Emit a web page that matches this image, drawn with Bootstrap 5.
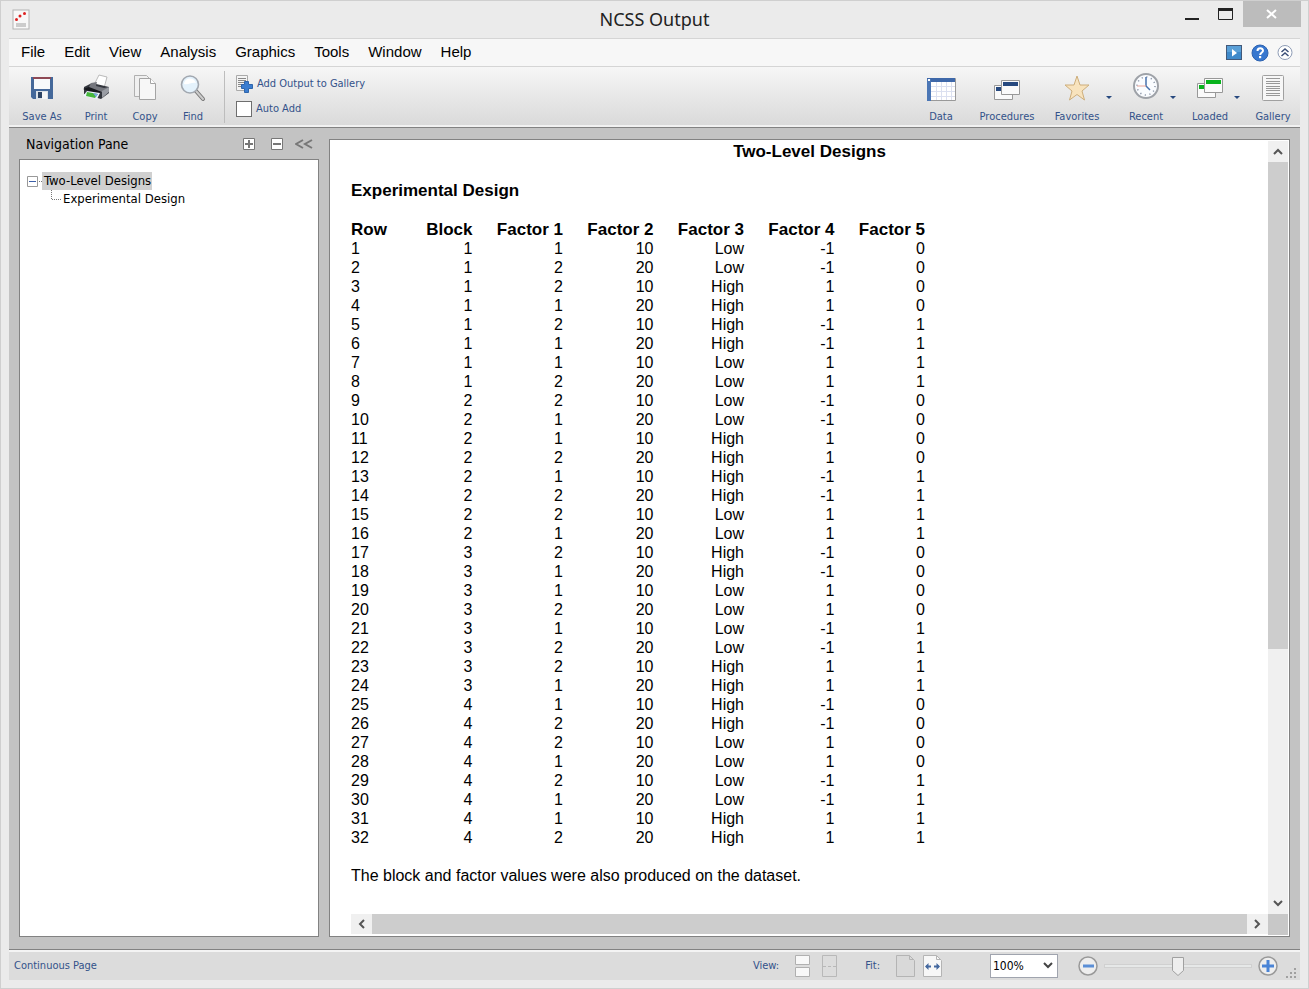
<!DOCTYPE html>
<html lang="en">
<head>
<meta charset="utf-8">
<meta name="viewport" content="width=device-width, initial-scale=1">
<title>NCSS Output</title>
<link href="https://cdn.jsdelivr.net/npm/bootstrap@5.3.0/dist/css/bootstrap.min.css" rel="stylesheet">
<style>
:root { --ui: "DejaVu Sans Condensed", "Noto Sans", sans-serif; --arial: "Liberation Sans", Arial, sans-serif; --navy: #33528a; }
body { background: #ebebeb; border: 1px solid #cfcfcf; color: #000; font-family: var(--ui); font-size: 11px; line-height: 14px; padding: 0 8px 8px; }
button { background: none; border: 0; padding: 0; color: inherit; }
svg { display: block; flex: none; }
.titlebar { height: 37px; }
.titlebar h1 { font: 18px/36px "Noto Sans", sans-serif; color: #222; }
.app-icon { position: absolute; left: 3px; top: 8px; }
.win-controls { position: absolute; right: -1px; top: 0; }
.win-btn { width: 34px; height: 26px; }
.win-btn.close-btn { width: 58px; background: #bcbcbc; }
.menubar { height: 29px; background: #f7f7f7; border: 1px solid #d5d5d5; border-width: 1px 0; padding: 0 7px 0 2px; }
.menubar a { font: 15px/25px var(--arial); color: #000; padding: 0 9px 2px 10px; text-decoration: none; }
.ribbon { height: 61px; background: linear-gradient(#f6f6f6, #d9d9d9); border-bottom: 1px solid #828282; padding: 0 7px 0 4px; color: var(--navy); box-shadow: inset 0 -2px #f1f1f1; }
.tool { display: flex; flex-direction: column; align-items: center; height: 57px; white-space: nowrap; }
.tool .pic { height: 42px; margin-bottom: 1px; display: flex; align-items: center; justify-content: center; }
.tool-40 { width: 40px; } .tool-42 { width: 42px; } .tool-44 { width: 44px; } .tool-48 { width: 48px; } .tool-50 { width: 50px; } .tool-52 { width: 52px; } .tool-58 { width: 58px; } .tool-68 { width: 68px; }
.ribbon-views { gap: 10px; }
.drop { width: 12px; height: 60px; display: flex; align-items: center; justify-content: center; }
.vr-line { width: 1px; height: 52px; background: #bdbdbd; margin: 4px 11px 0 7px; }
.auto-add { width: 16px; height: 16px; appearance: none; background: #fff; border: 1px solid #6e6e6e; margin: 0; }
.workspace { background: #c3c3c3; padding: 11px 10px 12px; border-bottom: 1px solid #828282; gap: 10px; min-height: 0; }
.nav-pane { width: 300px; flex: none; }
.pane-head { height: 20px; padding: 0 6px 11px 7px; }
.pane-head h2 { font: 14px/14px var(--ui); }
.panel { background: #fff; border: 1px solid #828282; }
.tree { font-size: 13px; padding: 12px 7px; }
.tree a { color: #000; text-decoration: none; line-height: 18px; height: 18px; padding: 0 1px 0 2px; white-space: nowrap; }
.tree a.chosen { background: #d0d0d0; }
.report-panel { display: grid; grid-template-columns: 20px minmax(0, 1fr) 20px; grid-template-rows: minmax(0, 1fr) 21px; padding: 1px; }
.report { grid-column: 2; overflow: hidden; font: 16px/19px var(--arial); padding-top: 1px; }
.report h2, .report h3 { font: bold 17px/19px var(--arial); margin: 0 0 20px; }
.report table { width: 574px; table-layout: fixed; margin-bottom: 19px; }
.report th, .report td { padding: 0; text-align: right; white-space: nowrap; }
.report th { font-size: 17px; }
.report th:first-child, .report td:first-child { text-align: left; }
.report .col-first { width: 31px; }
.sb { background: #f0f0f0; display: flex; }
.sb button { display: flex; align-items: center; justify-content: center; flex: none; }
.sb-v { grid-column: 3; flex-direction: column; }
.sb-v button { height: 21px; }
.sb-v .thumb { height: 63%; background: #cdcdcd; }
.sb-h { grid-column: 2; margin-bottom: 1px; }
.sb-h button { width: 21px; }
.sb-h .thumb { flex: 1; background: #cdcdcd; }
.corner { background: #c8c8c8; }
.status { height: 30px; background: #dcdcdc; border-top: 2px solid #f4f4f4; color: var(--navy); padding: 0 3px 0 5px; }
.status select { width: 68px; height: 24px; border: 1px solid #a0a4ae; background: #fff; font: 12px/20px var(--ui); color: #000; appearance: none; padding: 0 2px; }
.zoom-box .chev { position: absolute; right: 5px; top: 8px; pointer-events: none; }
.zoom-range { appearance: none; width: 148px; height: 20px; background: none; margin: 0 6px; }
.zoom-range::-webkit-slider-runnable-track { height: 4px; background: #e6e8e8; border: 1px solid #d0d0d0; }
.zoom-range::-webkit-slider-thumb { appearance: none; width: 12px; height: 20px; margin-top: -9px; background: url("data:image/svg+xml,%3Csvg xmlns='http://www.w3.org/2000/svg' width='12' height='20'%3E%3Cpath d='M.5 1.500h11v13l-5.500 5-5.500-5z' fill='%23eee' stroke='%23a0a0a0'/%3E%3C/svg%3E"); }
</style>
</head>
<body class="vh-100 d-flex flex-column overflow-hidden">
<header class="titlebar position-relative text-center flex-shrink-0">
  <svg class="app-icon" width="18" height="21" viewBox="0 0 18 21"><rect x="1" y="1" width="16" height="19" fill="#f8f8f8" stroke="#b4b4b4"/><rect x="4" y="14" width="10" height="4" fill="#ccc"/><g fill="#d22"><circle cx="4.500" cy="10.500" r="1.500"/><circle cx="8" cy="7" r="1.500"/><circle cx="12.500" cy="4.500" r="1.500"/></g></svg>
  <h1 class="m-0">NCSS Output</h1>
  <div class="win-controls d-flex">
    <button class="win-btn" aria-label="Minimize"><svg width="34" height="26"><path d="M10 18h14" stroke="#222" stroke-width="2"/></svg></button>
    <button class="win-btn" aria-label="Maximize"><svg width="34" height="26"><path d="M9.500 8v10.500h14V8" fill="none" stroke="#222"/><path d="M9 8.500h15" stroke="#222" stroke-width="3"/></svg></button>
    <button class="win-btn close-btn" aria-label="Close"><svg width="58" height="26"><path d="M24 9l9 8M33 9l-9 8" stroke="#fff" stroke-width="2"/></svg></button>
  </div>
</header>

<nav class="menubar d-flex align-items-center flex-shrink-0" aria-label="Main menu">
  <a href="#">File</a><a href="#">Edit</a><a href="#">View</a><a href="#">Analysis</a><a href="#">Graphics</a><a href="#">Tools</a><a href="#">Window</a><a href="#">Help</a>
  <div class="d-flex align-items-center ms-auto gap-2">
    <button aria-label="Play tutorial"><svg width="18" height="18"><rect x="1.500" y="1.500" width="15" height="14" fill="#3f8acb" stroke="#42597a"/><path d="M2 2h14v6H2z" fill="#5aa0d8"/><path d="M7 5l5 4-5 3.500z" fill="#fff"/></svg></button>
    <button aria-label="Help"><svg width="18" height="18"><circle cx="9" cy="9" r="8" fill="#3777cf" stroke="#2d62b0"/><path d="M6.500 7c0-3.500 5.500-3.500 5.500-.3C12 8.500 9.200 8.500 9.200 11" fill="none" stroke="#fff" stroke-width="2"/><rect x="8" y="12" width="2.200" height="2.200" fill="#fff"/></svg></button>
    <button aria-label="Collapse ribbon"><svg width="16" height="18"><circle cx="8" cy="8.500" r="7" fill="#fff" stroke="#8d9bb5"/><path d="M4.500 8L8 5l3.500 3M4.500 12L8 9l3.500 3" fill="none" stroke="#3b4f78" stroke-width="1.500"/></svg></button>
  </div>
</nav>

<div class="ribbon d-flex flex-shrink-0" role="toolbar">
  <button class="tool tool-58"><span class="pic"><svg width="24" height="26" viewBox="0 0 24 26"><path d="M1 2h22v22H3l-2-2z" fill="#44689a"/><path d="M4 2h16v12H4z" fill="#f7f9fb"/><path d="M3 2h18v2H3z" fill="#8e4854"/><path d="M6 16h12v8H6z" fill="#dce2e8"/><path d="M8 17h4v6H8z" fill="#2d4465"/><path d="M12 17h5v7h-5z" fill="#f6f6f6"/></svg></span>Save As</button>
  <button class="tool tool-50"><span class="pic"><svg width="30" height="28" viewBox="0 0 30 28"><path d="M13 11l5-10 8 2-3 11z" fill="#fff" stroke="#aaa" stroke-width=".8"/><path d="M3 13l8-4 17 4v6l-8 6L3 20z" fill="#33363d"/><path d="M2 15l9-3 11 3-4 5z" fill="#16181d"/><path d="M10 9l6-1-1 4 8 2 5-1-7 5-13-5z" fill="#75777e"/><path d="M21 17l7-4v5l-7 6z" fill="#9a9da4"/><path d="M6 17l13 2-3 6-14-3z" fill="#eef3ff"/><path d="M6 18l11 2-3 4-9-2z" fill="#46b73b"/><path d="M12 19l5 1-2 3z" fill="#79a6e6"/></svg></span>Print</button>
  <button class="tool tool-48"><span class="pic"><svg width="24" height="28" viewBox="0 0 24 28"><path d="M1.500 1.500h12l4 4v17h-16z" fill="#f0f0f0" stroke="#b0b0b0"/><path d="M6.500 4.500h11l5 5v16h-16z" fill="#f7f7f7" stroke="#a4a4a4"/><path d="M17.500 4.500v5h5" fill="#fff" stroke="#a4a4a4"/></svg></span>Copy</button>
  <button class="tool tool-48"><span class="pic"><svg width="26" height="28" viewBox="0 0 26 28"><path d="M16 17l7 8" stroke="#777" stroke-width="4" stroke-linecap="round"/><path d="M16 17l7 8" stroke="#ccc" stroke-width="2" stroke-linecap="round"/><circle cx="10" cy="10.500" r="8.500" fill="#e4f2fc" stroke="#a2a8b0" stroke-width="1.600"/><path d="M4 10c1-7 10-7 12-1-5-1-7 2-12 1z" fill="#fff"/></svg></span>Find</button>
  <div class="vr-line"></div>
  <div class="pt-2">
    <button class="d-flex align-items-center gap-1 text-nowrap"><svg width="17" height="18"><path d="M.5.5h11v15H.5z" fill="#f4f4f4" stroke="#aaa"/><path d="M2 3.500h8M2 5.500h8M2 7.500h8M2 9.500h5M2 11.500h4" stroke="#888"/><path d="M8.500 6.500h4v3h4v4h-4v4h-4v-4h-3v-4h3z" fill="#3b7dd0" stroke="#2f65ab"/></svg>Add Output to Gallery</button>
    <div class="d-flex align-items-center gap-1 pt-2"><input class="auto-add" type="checkbox" id="autoAdd"><label for="autoAdd">Auto Add</label></div>
  </div>
  <div class="ribbon-views d-flex ms-auto">
    <button class="tool tool-44"><span class="pic"><svg class="mt-1" width="30" height="24"><path d="M1.500.5h28v22h-28z" fill="#fff" stroke="#999"/><path d="M5 8.500h24M5 13.500h24M5 18.500h24M10.500 4v18M15.500 4v18M20.500 4v18M25.500 4v18" stroke="#dbe0f0"/><path d="M1 0h28v4H1z" fill="#3e68a9"/><path d="M1 1h4v22H1z" fill="#4b76b5"/><path d="M2 1h2v2H2z" fill="#fff"/></svg></span>Data</button>
    <button class="tool tool-68"><span class="pic"><svg class="mt-1" width="28" height="20"><g fill="#fafafa" stroke="#989898"><path d="M1.500 5.500h18v14h-18z"/><path d="M8.500.5h18v14h-18z"/></g><path d="M3 7h5v4H3zM10 2h15v4H10z" fill="#27497f"/></svg></span>Procedures</button>
    <div class="d-flex">
      <button class="tool tool-52"><span class="pic"><svg width="26" height="26" viewBox="0 0 26 26"><path d="M13 1l3 9h9l-7 6 2.500 9L13 19.500 5.500 25 8 16 1 10h9z" fill="#f8e3bd" stroke="#cdae7c"/></svg></span>Favorites</button>
      <button class="drop" aria-label="Favorites list"><svg width="6" height="3"><path d="M0 0h6L3 3z" fill="#27497f"/></svg></button>
    </div>
    <div class="d-flex">
      <button class="tool tool-42"><span class="pic"><svg class="mb-1" width="28" height="28"><circle cx="14" cy="14" r="12" fill="#fafcff" stroke="#9ea2a8" stroke-width="2"/><circle cx="14" cy="14" r="9" fill="none" stroke="#8b96a8" stroke-width="1.500" stroke-dasharray="1.200 3.510"/><path d="M14 5v9l4 4" fill="none" stroke="#4871ad" stroke-width="1.500"/><path d="M5 14h9" stroke="#e8a498"/></svg></span>Recent</button>
      <button class="drop" aria-label="Recent list"><svg width="6" height="3"><path d="M0 0h6L3 3z" fill="#27497f"/></svg></button>
    </div>
    <div class="d-flex">
      <button class="tool tool-42"><span class="pic"><svg width="28" height="20"><g fill="#fafafa" stroke="#989898"><path d="M1.500 5.500h18v14h-18z"/><path d="M8.500.5h18v14h-18z"/></g><path d="M3 7h5v4H3zM10 2h15v4H10z" fill="#08b31c"/></svg></span>Loaded</button>
      <button class="drop" aria-label="Loaded list"><svg width="6" height="3"><path d="M0 0h6L3 3z" fill="#27497f"/></svg></button>
    </div>
    <button class="tool tool-40"><span class="pic"><svg width="22" height="26"><rect x=".5" y=".5" width="21" height="25" rx="1" fill="#f7f7f7" stroke="#a0a0a0"/><path d="M4 3.500h14M4 6.500h14M4 8.500h14M4 11.500h14M4 13.500h14M4 15.500h14M4 18.500h14M4 20.500h14" stroke="#999"/></svg></span>Gallery</button>
  </div>
</div>

<main class="workspace d-flex flex-grow-1">
  <aside class="nav-pane d-flex flex-column">
    <div class="pane-head d-flex align-items-center">
      <h2 class="m-0 me-auto">Navigation Pane</h2>
      <button class="me-3" aria-label="Expand all"><svg width="12" height="12"><path d="M.5.5h11v11H.5z" fill="#fff" stroke="#777"/><path d="M2 6h8M6 2v8" stroke="#777" stroke-width="2"/></svg></button>
      <button class="me-2" aria-label="Collapse all"><svg width="12" height="12"><path d="M.5.5h11v11H.5z" fill="#fff" stroke="#777"/><path d="M2 6h8" stroke="#777" stroke-width="2"/></svg></button>
      <button class="ms-1" aria-label="Hide pane"><svg width="18" height="10"><path d="M8 1L1 5l7 4M17 1l-7 4 7 4" fill="none" stroke="#777" stroke-width="2"/></svg></button>
    </div>
    <div class="panel tree flex-grow-1">
      <div class="d-flex align-items-center">
        <button aria-label="Collapse Two-Level Designs"><svg width="15" height="18"><path d="M.5 4.500h10v10H.5z" fill="#fff" stroke="#999"/><path d="M2 9.500h7" stroke="#3c5fa8"/><path d="M12 9.500h3" stroke="#777" stroke-dasharray="1 1"/></svg></button>
        <a class="chosen" href="#">Two-Level Designs</a>
      </div>
      <div class="d-flex align-items-center">
        <svg width="34" height="18"><path d="M24.500 0v9.500H34" fill="none" stroke="#777" stroke-dasharray="1 1"/></svg>
        <a href="#">Experimental Design</a>
      </div>
    </div>
  </aside>

  <section class="panel report-panel flex-grow-1">
    <div class="report">
      <h2 class="text-center">Two-Level Designs</h2>
      <h3>Experimental Design</h3>
      <table>
        <colgroup><col class="col-first"><col><col><col><col><col><col></colgroup>
        <thead><tr><th>Row</th><th>Block</th><th>Factor 1</th><th>Factor 2</th><th>Factor 3</th><th>Factor 4</th><th>Factor 5</th></tr></thead>
        <tbody id="designRows"></tbody>
      </table>
      <p class="m-0">The block and factor values were also produced on the dataset.</p>
    </div>
    <div class="sb sb-v">
      <button aria-label="Scroll up"><svg width="10" height="7"><path d="M1 6l4-4 4 4" fill="none" stroke="#555" stroke-width="2"/></svg></button>
      <div class="thumb"></div>
      <button class="mt-auto" aria-label="Scroll down"><svg width="10" height="7"><path d="M1 1l4 4 4-4" fill="none" stroke="#555" stroke-width="2"/></svg></button>
    </div>
    <div class="sb sb-h">
      <button aria-label="Scroll left"><svg width="7" height="10"><path d="M6 1L2 5l4 4" fill="none" stroke="#555" stroke-width="2"/></svg></button>
      <div class="thumb"></div>
      <button aria-label="Scroll right"><svg width="7" height="10"><path d="M1 1l4 4-4 4" fill="none" stroke="#555" stroke-width="2"/></svg></button>
    </div>
    <div class="corner"></div>
  </section>
</main>

<footer class="status d-flex align-items-center flex-shrink-0">
  <span class="me-auto">Continuous Page</span>
  <span class="me-3">View:</span>
  <button class="me-2" aria-label="Continuous view"><svg width="18" height="24"><path d="M.5 1.500h14v9H.5zM.5 13.500h14v9H.5z" fill="#f8f8f8" stroke="#b0b0b0"/></svg></button>
  <button class="me-4" aria-label="Page view"><svg width="20" height="24"><path d="M1.500 1.500h14v21h-14z" fill="#dcdcdc" stroke="#b8b8b8"/><path d="M2 12.500h13" stroke="#b8b8b8" stroke-dasharray="3 2"/></svg></button>
  <span class="me-3">Fit:</span>
  <button class="me-2" aria-label="Fit page"><svg width="19" height="24"><path d="M.5 1.500h13l5 5v16H.5z" fill="#d9d9d9" stroke="#b4b4b4"/><path d="M13.500 1.500v4h4" fill="none" stroke="#b4b4b4"/></svg></button>
  <button class="me-5" aria-label="Fit width"><svg width="19" height="24"><path d="M.5 1.500h13l5 5v16H.5z" fill="#f7f7f7" stroke="#b4b4b4"/><path d="M13.500 1.500v4h4" fill="none" stroke="#b4b4b4"/><path d="M8 12.500H3M11 12.500h5" stroke="#44689f" stroke-width="2"/><path d="M5.500 9L2 12.500 5.500 16zM13.500 9l3.500 3.500-3.500 3.500z" fill="#44689f"/></svg></button>
  <div class="zoom-box position-relative me-3">
    <select aria-label="Zoom level"><option>100%</option></select>
    <svg class="chev" width="10" height="8"><path d="M1 1l4 4 4-4" fill="none" stroke="#444" stroke-width="2"/></svg>
  </div>
  <button class="ms-1" aria-label="Zoom out"><svg width="20" height="20"><circle cx="10" cy="10" r="9" fill="#eee" stroke="#999" stroke-width="1.500"/><path d="M5 10h11" stroke="#5b8fd6" stroke-width="3"/></svg></button>
  <input class="zoom-range" type="range" min="0" max="200" value="100" aria-label="Zoom">
  <button class="me-2" aria-label="Zoom in"><svg width="20" height="20"><circle cx="10" cy="10" r="9" fill="#eee" stroke="#999" stroke-width="1.500"/><path d="M4 10h12M10 4v12" stroke="#4a84d6" stroke-width="3"/></svg></button>
  <svg class="align-self-end" width="11" height="12"><path d="M8 0h2v2H8zM4 4h2v2H4zM8 4h2v2H8zM0 8h2v2H0zM4 8h2v2H4zM8 8h2v2H8z" fill="#a0a0a0"/></svg>
</footer>

<script src="https://cdn.jsdelivr.net/npm/bootstrap@5.3.0/dist/js/bootstrap.bundle.min.js"></script>
<script>
// Fractional factorial design: 4 blocks of 8 runs
const factor1 = "12212112" + "21121221" + "21121221" + "12212112";
const factor3 = "LLHHHHLL" + "LLHHHHLL" + "HHLLLLHH" + "HHLLLLHH";
const body = document.getElementById("designRows");
for (let i = 0; i < 32; i++) {
  const row = body.insertRow();
  [i + 1, (i >> 3) + 1, factor1[i], i % 2 ? 20 : 10, factor3[i] === "L" ? "Low" : "High",
   i % 4 < 2 ? -1 : 1, i % 8 < 4 ? 0 : 1].forEach(v => row.insertCell().textContent = v);
}
</script>
</body>
</html>
